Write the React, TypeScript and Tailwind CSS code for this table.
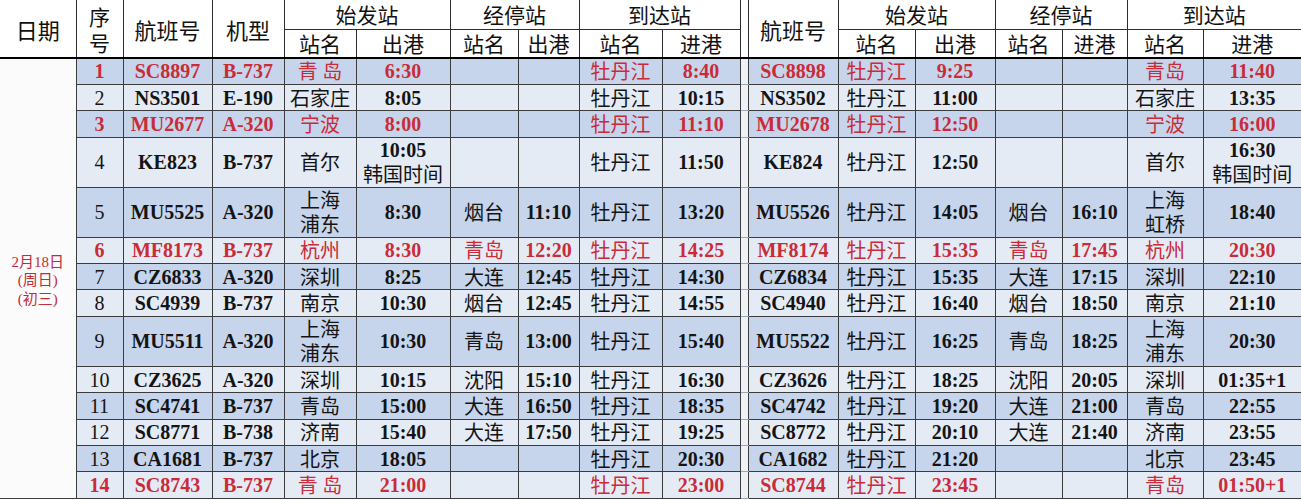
type Row = { red?: boolean; tall?: boolean; c: string[] };

const rows: Row[] = [
  { red: true, c: ["1", "SC8897", "B-737", "青 岛", "6:30", "", "", "牡丹江", "8:40", "SC8898", "牡丹江", "9:25", "", "", "青岛", "11:40"] },
  { c: ["2", "NS3501", "E-190", "石家庄", "8:05", "", "", "牡丹江", "10:15", "NS3502", "牡丹江", "11:00", "", "", "石家庄", "13:35"] },
  { red: true, c: ["3", "MU2677", "A-320", "宁波", "8:00", "", "", "牡丹江", "11:10", "MU2678", "牡丹江", "12:50", "", "", "宁波", "16:00"] },
  { tall: true, c: ["4", "KE823", "B-737", "首尔", "10:05\n韩国时间", "", "", "牡丹江", "11:50", "KE824", "牡丹江", "12:50", "", "", "首尔", "16:30\n韩国时间"] },
  { tall: true, c: ["5", "MU5525", "A-320", "上海\n浦东", "8:30", "烟台", "11:10", "牡丹江", "13:20", "MU5526", "牡丹江", "14:05", "烟台", "16:10", "上海\n虹桥", "18:40"] },
  { red: true, c: ["6", "MF8173", "B-737", "杭州", "8:30", "青岛", "12:20", "牡丹江", "14:25", "MF8174", "牡丹江", "15:35", "青岛", "17:45", "杭州", "20:30"] },
  { c: ["7", "CZ6833", "A-320", "深圳", "8:25", "大连", "12:45", "牡丹江", "14:30", "CZ6834", "牡丹江", "15:35", "大连", "17:15", "深圳", "22:10"] },
  { c: ["8", "SC4939", "B-737", "南京", "10:30", "烟台", "12:45", "牡丹江", "14:55", "SC4940", "牡丹江", "16:40", "烟台", "18:50", "南京", "21:10"] },
  { tall: true, c: ["9", "MU5511", "A-320", "上海\n浦东", "10:30", "青岛", "13:00", "牡丹江", "15:40", "MU5522", "牡丹江", "16:25", "青岛", "18:25", "上海\n浦东", "20:30"] },
  { c: ["10", "CZ3625", "A-320", "深圳", "10:15", "沈阳", "15:10", "牡丹江", "16:30", "CZ3626", "牡丹江", "18:25", "沈阳", "20:05", "深圳", "01:35+1"] },
  { c: ["11", "SC4741", "B-737", "青岛", "15:00", "大连", "16:50", "牡丹江", "18:35", "SC4742", "牡丹江", "19:20", "大连", "21:00", "青岛", "22:55"] },
  { c: ["12", "SC8771", "B-738", "济南", "15:40", "大连", "17:50", "牡丹江", "19:25", "SC8772", "牡丹江", "20:10", "大连", "21:40", "济南", "23:55"] },
  { c: ["13", "CA1681", "B-737", "北京", "18:05", "", "", "牡丹江", "20:30", "CA1682", "牡丹江", "21:20", "", "", "北京", "23:45"] },
  { red: true, c: ["14", "SC8743", "B-737", "青 岛", "21:00", "", "", "牡丹江", "23:00", "SC8744", "牡丹江", "23:45", "", "", "青岛", "01:50+1"] },
];

const widths = [
  "w-[76px]", "w-[47px]", "w-[89px]", "w-[72px]", "w-[72px]", "w-[94px]", "w-[68px]", "w-[61px]", "w-[83px]", "w-[78px]",
  "w-[8px]",
  "w-[90px]", "w-[77px]", "w-[80px]", "w-[67px]", "w-[65px]", "w-[76px]", "w-[98px]",
];

const cjk = /[\u4e00-\u9fff]/;

function CellText({ text, red, seq }: { text: string; red?: boolean; seq?: boolean }) {
  const lines = text.split("\n");
  return (
    <>
      {lines.map((line, i) => {
        const isCjk = cjk.test(line);
        const cls = isCjk
          ? "font-['Noto_Sans_CJK_SC',sans-serif] font-normal"
          : seq && !red
            ? "font-['Liberation_Serif',serif] font-normal"
            : "font-['Liberation_Serif',serif] font-bold";
        return (
          <div key={i} className={cls}>
            {line}
          </div>
        );
      })}
    </>
  );
}

const th = "border border-[#2e2e2e] bg-white text-[21px] font-normal text-[#111] font-['Noto_Sans_CJK_SC',sans-serif] leading-[24px] p-0";
const thBottom = th + " border-b-2 border-b-black";

export default function App() {
  return (
    <div className="w-[1301px] h-[500px] overflow-hidden bg-white">
      <table className="table-fixed border-collapse w-[1301px]">
        <colgroup>
          {widths.map((w, i) => (
            <col key={i} className={w} />
          ))}
        </colgroup>
        <thead>
          <tr className="h-[29px]">
            <th rowSpan={2} className={thBottom + " border-l-0 border-t-0 text-[22px]"}>日期</th>
            <th rowSpan={2} className={thBottom + " border-t-0 leading-[26px]"}>
              序<br />号
            </th>
            <th rowSpan={2} className={thBottom + " border-t-0 text-[22px]"}>航班号</th>
            <th rowSpan={2} className={thBottom + " border-t-0 text-[22px]"}>机型</th>
            <th colSpan={2} className={th + " border-t-0"}>始发站</th>
            <th colSpan={2} className={th + " border-t-0"}>经停站</th>
            <th colSpan={2} className={th + " border-t-0"}>到达站</th>
            <th rowSpan={2} className={thBottom + " border-t-0"}></th>
            <th rowSpan={2} className={thBottom + " border-t-0 text-[22px]"}>航班号</th>
            <th colSpan={2} className={th + " border-t-0"}>始发站</th>
            <th colSpan={2} className={th + " border-t-0"}>经停站</th>
            <th colSpan={2} className={th + " border-t-0 border-r-0"}>到达站</th>
          </tr>
          <tr className="h-[29px]">
            {["站名", "出港", "站名", "出港", "站名", "进港"].map((t, i) => (
              <th key={"a" + i} className={thBottom}>{t}</th>
            ))}
            {["站名", "出港", "站名", "进港", "站名", "进港"].map((t, i) => (
              <th key={"b" + i} className={thBottom + (i === 5 ? " border-r-0" : "")}>{t}</th>
            ))}
          </tr>
        </thead>
        <tbody>
          {rows.map((r, ri) => {
            const bg = ri % 2 === 0 ? "bg-[#c6d5eb]" : "bg-[#e5ebf4]";
            const color = r.red ? "text-[#c92c38]" : "text-[#141414]";
            const td = `border border-[#3c3c3c] p-0 text-center align-middle text-[20px] leading-[24px] ${bg} ${color}`;
            return (
              <tr key={ri} className={r.tall ? "h-[50px]" : "h-[26.4px]"}>
                {ri === 0 && (
                  <td
                    rowSpan={rows.length}
                    className="border border-[#3c3c3c] border-l-0 bg-[#fbfbfc] text-center align-middle p-0 pt-[4px] text-[15px] leading-[18.5px] text-[#c42a3a] font-normal font-['Liberation_Serif','Noto_Sans_CJK_SC',serif]"
                  >
                    <div>2月18日</div>
                    <div>(周日)</div>
                    <div>(初三)</div>
                  </td>
                )}
                {r.c.slice(0, 9).map((t, ci) => (
                  <td key={ci} className={td}>
                    <CellText text={t} red={r.red} seq={ci === 0} />
                  </td>
                ))}
                <td className="border border-[#3c3c3c] border-y-[#9aa6b6] bg-[#eef1f6] p-0"></td>
                {r.c.slice(9).map((t, ci) => (
                  <td key={"r" + ci} className={td + (ci === 6 ? " border-r-0" : "")}>
                    <CellText text={t} red={r.red} />
                  </td>
                ))}
              </tr>
            );
          })}
        </tbody>
      </table>
    </div>
  );
}
